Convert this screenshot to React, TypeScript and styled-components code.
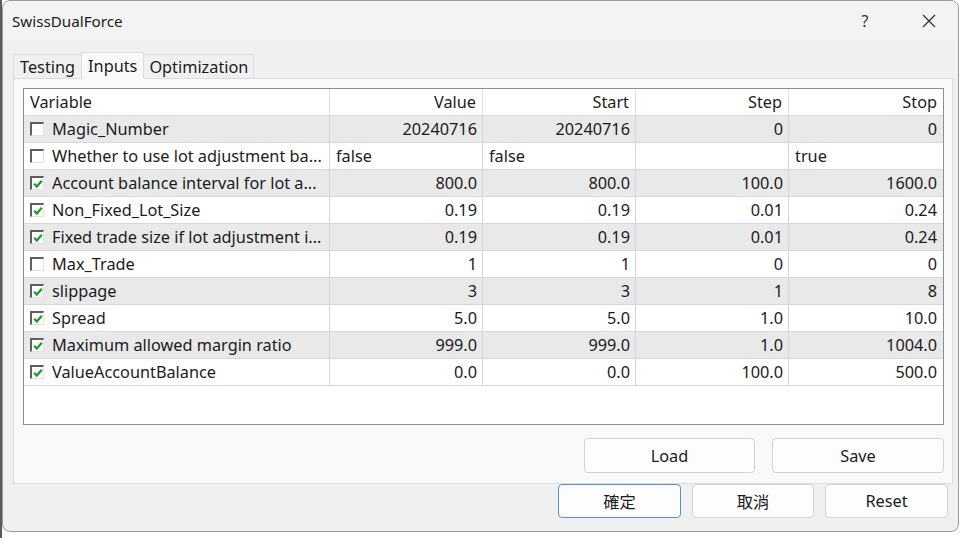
import React from "react";
import styled, { createGlobalStyle } from "styled-components";

const Global = createGlobalStyle`
  html, body { margin: 0; padding: 0; background: #ffffff; }
  body { font-family: "Noto Sans", "Segoe UI", Arial, sans-serif; color: #1b1b1b; }
  * { box-sizing: border-box; }
`;

const FONT = `"Noto Sans", "Noto Sans CJK TC", sans-serif`;
const FS = "16.3px";

const Screen = styled.div`
  width: 960px;
  height: 538px;
  display: flex;
  align-items: flex-start;
  background: #ffffff;
  border-left: 2px solid #5a5a5a;
`;

const Window = styled.div`
  width: 957px;
  height: 532px;
  display: flex;
  flex-direction: column;
  background: #f0f0f0;
  border: 1px solid #9a9a9a;
  border-radius: 8px;
  overflow: hidden;
  font-family: ${FONT};
  position: relative;
`;

const TitleBar = styled.div`
  height: 39px;
  flex: none;
  display: flex;
  align-items: center;
  background: #f3f3f3;
  padding-left: 9px;
`;

const Title = styled.div`
  flex: 1;
  font-size: 15.2px;
  color: #1b1b1b;
`;

const CtrlButton = styled.div<{ $w: number }>`
  width: ${(p) => p.$w}px;
  height: 39px;
  display: flex;
  align-items: center;
  justify-content: center;
  font-size: 16px;
  color: #333;
`;

const Body = styled.div`
  flex: 1;
  display: flex;
  flex-direction: column;
  padding: 11px 3px 0 10px;
`;

const TabBar = styled.div`
  height: 27px;
  display: flex;
  align-items: flex-end;
`;

const Tab = styled.div<{ $active?: boolean; $pad: number }>`
  height: ${(p) => (p.$active ? 27 : 24)}px;
  padding: 0 ${(p) => p.$pad}px;
  display: flex;
  align-items: center;
  font-size: ${FS};
  color: #1b1b1b;
  background: ${(p) => (p.$active ? "#f9f9f9" : "#f0f0f0")};
  border: 1px solid #dcdcdc;
  border-bottom: ${(p) => (p.$active ? "1px solid #f9f9f9" : "none")};
  margin-bottom: ${(p) => (p.$active ? -1 : 0)}px;
  position: relative;
  z-index: ${(p) => (p.$active ? 1 : 0)};
  & + & { margin-left: -1px; }
`;

const Panel = styled.div`
  width: 940px;
  height: 406px;
  background: #f9f9f9;
  border: 1px solid #dcdcdc;
  padding: 9px 9px 0 9px;
  display: flex;
  flex-direction: column;
`;

const Table = styled.div`
  width: 921px;
  height: 337px;
  background: #ffffff;
  border: 1px solid #8e8e8e;
  display: flex;
  flex-direction: column;
`;

const GRID = "306px 153px 153px 153px 1fr";

const HeaderRow = styled.div`
  display: grid;
  grid-template-columns: ${GRID};
  height: 27px;
  border-bottom: 1px solid #d9d9d9;
`;

const HeadCell = styled.div<{ $right?: boolean }>`
  display: flex;
  align-items: center;
  justify-content: ${(p) => (p.$right ? "flex-end" : "flex-start")};
  padding: 0 6px 0 6px;
  font-size: ${FS};
  border-right: 1px solid #dedede;
  &:last-child { border-right: none; }
`;

const Row = styled.div<{ $shade: boolean }>`
  display: grid;
  grid-template-columns: ${GRID};
  height: 27px;
  background: ${(p) => (p.$shade ? "#e9e9e9" : "#ffffff")};
  border-bottom: 1px solid #d6d6d6;
`;

const Cell = styled.div<{ $right?: boolean }>`
  display: flex;
  align-items: center;
  justify-content: ${(p) => (p.$right ? "flex-end" : "flex-start")};
  padding: 0 5px 0 6px;
  font-size: ${FS};
  white-space: nowrap;
  overflow: hidden;
  border-right: 1px solid #d6d6d6;
  &:last-child { border-right: none; padding-right: 6px; }
`;

const NameCell = styled(Cell)`
  padding-left: 6px;
  gap: 8px;
`;

const Box = styled.span`
  width: 14px;
  height: 14px;
  flex: none;
  background: #ffffff;
  border-top: 2px solid #5e5e5e;
  border-left: 2px solid #5e5e5e;
  border-right: 1px solid #e2e2e2;
  border-bottom: 1px solid #e2e2e2;
  display: flex;
  align-items: center;
  justify-content: center;
`;

const Actions = styled.div`
  display: flex;
  justify-content: flex-end;
  gap: 17px;
  margin-top: 13px;
  width: 921px;
`;

const Btn = styled.div<{ $w: number; $h: number; $focus?: boolean }>`
  width: ${(p) => p.$w}px;
  height: ${(p) => p.$h}px;
  display: flex;
  align-items: center;
  justify-content: center;
  font-family: ${FONT};
  font-size: ${FS};
  color: #1b1b1b;
  background: #fdfdfd;
  border: 1px solid ${(p) => (p.$focus ? "#5b8fc7" : "#d3d3d3")};
  border-radius: 4px;
`;

const Footer = styled.div`
  display: flex;
  justify-content: flex-end;
  gap: 11px;
  padding-top: 0;
  padding-right: 7px;
`;

const Grip = styled.div`
  position: absolute;
  right: 2px;
  bottom: 2px;
  width: 8px;
  height: 8px;
`;

type R = { on: boolean; name: string; v: string; s: string; st: string; sp: string; left?: boolean };

const rows: R[] = [
  { on: false, name: "Magic_Number", v: "20240716", s: "20240716", st: "0", sp: "0" },
  { on: false, name: "Whether to use lot adjustment ba...", v: "false", s: "false", st: "", sp: "true", left: true },
  { on: true, name: "Account balance interval for lot a...", v: "800.0", s: "800.0", st: "100.0", sp: "1600.0" },
  { on: true, name: "Non_Fixed_Lot_Size", v: "0.19", s: "0.19", st: "0.01", sp: "0.24" },
  { on: true, name: "Fixed trade size if lot adjustment i...", v: "0.19", s: "0.19", st: "0.01", sp: "0.24" },
  { on: false, name: "Max_Trade", v: "1", s: "1", st: "0", sp: "0" },
  { on: true, name: "slippage", v: "3", s: "3", st: "1", sp: "8" },
  { on: true, name: "Spread", v: "5.0", s: "5.0", st: "1.0", sp: "10.0" },
  { on: true, name: "Maximum allowed margin ratio", v: "999.0", s: "999.0", st: "1.0", sp: "1004.0" },
  { on: true, name: "ValueAccountBalance", v: "0.0", s: "0.0", st: "100.0", sp: "500.0" },
];

function Check({ on }: { on: boolean }) {
  return (
    <Box>
      {on && (
        <svg width="10" height="10" viewBox="0 0 10 10">
          <path d="M1.2 4.8 L3.8 7.6 L8.8 1.8" fill="none" stroke="#1b9e2a" strokeWidth="2.3" />
        </svg>
      )}
    </Box>
  );
}

export default function App() {
  return (
    <Screen>
      <Global />
      <Window>
        <TitleBar>
          <Title>SwissDualForce</Title>
          <CtrlButton $w={46}>?</CtrlButton>
          <CtrlButton $w={18} />
          <CtrlButton $w={46}>
            <svg width="16" height="16" viewBox="0 0 16 16">
              <path d="M2 2 L14 14 M14 2 L2 14" stroke="#333" strokeWidth="1.3" fill="none" />
            </svg>
          </CtrlButton>
          <CtrlButton $w={6} />
        </TitleBar>
        <Body>
          <TabBar>
            <Tab $pad={6}>Testing</Tab>
            <Tab $pad={6} $active>Inputs</Tab>
            <Tab $pad={5}>Optimization</Tab>
          </TabBar>
          <Panel>
            <Table>
              <HeaderRow>
                <HeadCell>Variable</HeadCell>
                <HeadCell $right>Value</HeadCell>
                <HeadCell $right>Start</HeadCell>
                <HeadCell $right>Step</HeadCell>
                <HeadCell $right>Stop</HeadCell>
              </HeaderRow>
              {rows.map((r, i) => (
                <Row key={i} $shade={i % 2 === 0}>
                  <NameCell>
                    <Check on={r.on} />
                    {r.name}
                  </NameCell>
                  <Cell $right={!r.left}>{r.v}</Cell>
                  <Cell $right={!r.left}>{r.s}</Cell>
                  <Cell $right={!r.left}>{r.st}</Cell>
                  <Cell $right={!r.left}>{r.sp}</Cell>
                </Row>
              ))}
            </Table>
            <Actions>
              <Btn $w={171} $h={35}>Load</Btn>
              <Btn $w={172} $h={35}>Save</Btn>
            </Actions>
          </Panel>
          <Footer>
            <Btn $w={123} $h={34} $focus>確定</Btn>
            <Btn $w={122} $h={34}>取消</Btn>
            <Btn $w={123} $h={34}>Reset</Btn>
          </Footer>
        </Body>
        <Grip>
          <svg width="8" height="8" viewBox="0 0 8 8">
            <rect x="6" y="0" width="2" height="2" fill="#b8b8b8" />
            <rect x="3" y="3" width="2" height="2" fill="#b8b8b8" />
            <rect x="6" y="3" width="2" height="2" fill="#b8b8b8" />
            <rect x="0" y="6" width="2" height="2" fill="#b8b8b8" />
            <rect x="3" y="6" width="2" height="2" fill="#b8b8b8" />
            <rect x="6" y="6" width="2" height="2" fill="#b8b8b8" />
          </svg>
        </Grip>
      </Window>
    </Screen>
  );
}
